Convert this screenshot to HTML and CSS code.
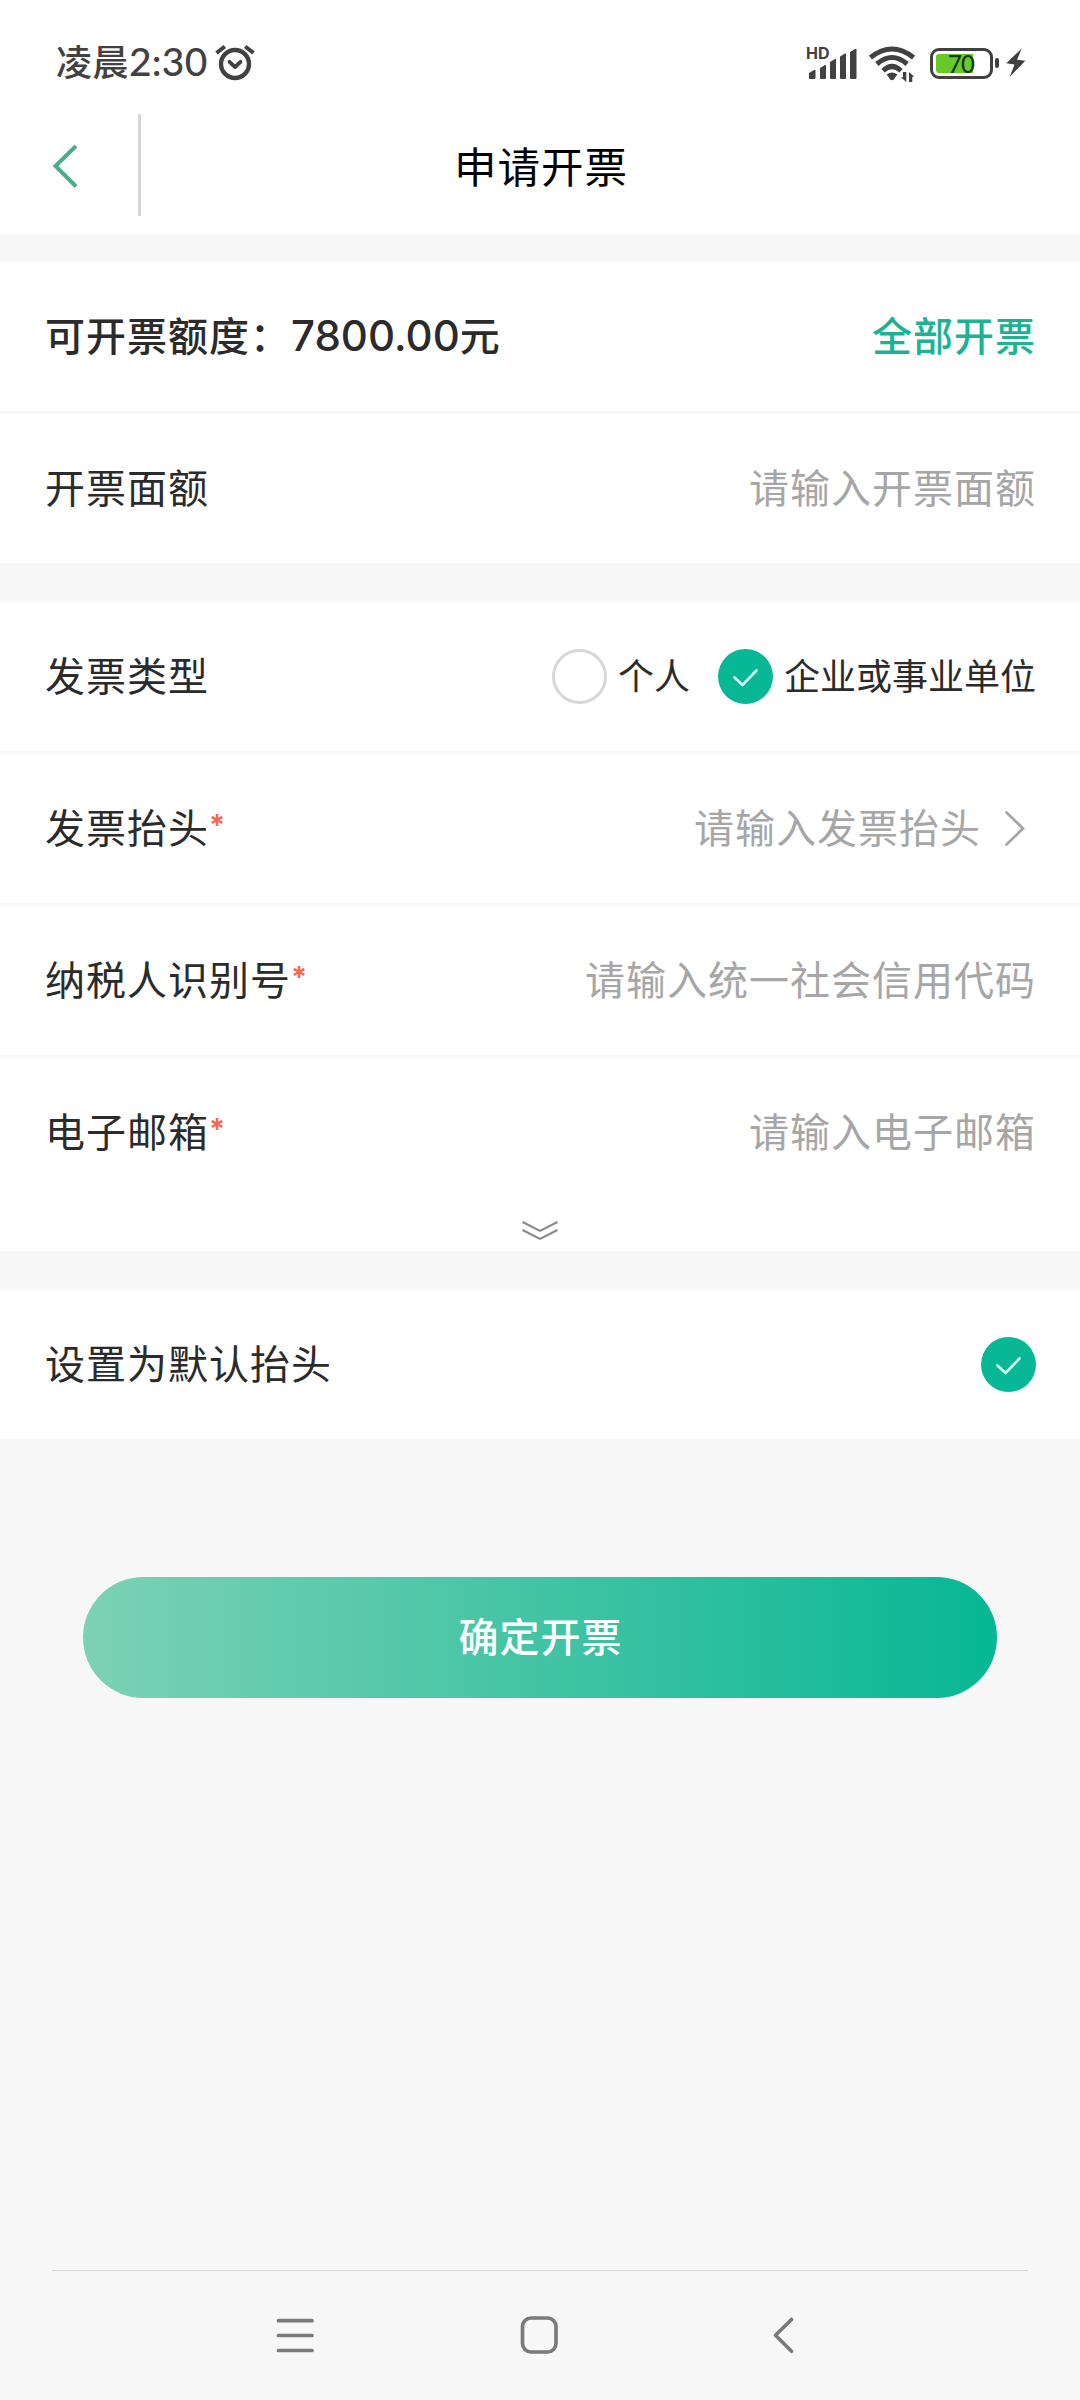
FILE: index.html
```html
<!DOCTYPE html>
<html lang="zh-CN">
<head>
<meta charset="utf-8">
<title>申请开票</title>
<link rel="stylesheet" href="styles.css">
</head>
<body>
<div class="status">
  <div class="status-left">
    <span class="time">凌晨<span class="time-num">2:30</span></span>
    <svg class="alarm" width="40" height="40" viewBox="0 0 40 40" fill="none" stroke="#414141" stroke-linecap="round" stroke-linejoin="round">
      <circle cx="20" cy="21" r="14" stroke-width="4.400"/>
      <path d="M14.500 18.800L20 24l5.500-5.200" stroke-width="3.800"/>
      <path d="M1.500 10L9.800 3.500M30.200 3.500l8.300 6.500" stroke-width="4" stroke-linecap="butt"/>
    </svg>
  </div>
  <div class="status-right">
    <div class="signal">
      <span class="hd">HD</span>
      <svg width="52" height="36" viewBox="0 0 52 36" fill="#414141">
        <path d="M3 29l5-3h1.500v8q0 1-1 1H4q-1 0-1-1zM14 24l5-3h1v13q0 1-1 1h-4q-1 0-1-1zM24 18l5-3h1v19q0 1-1 1h-4q-1 0-1-1zM34 12.500l5-3h1V34q0 1-1 1h-4q-1 0-1-1zM44 8l5-3h1.500v29q0 1-1 1H45q-1 0-1-1z"/>
      </svg>
    </div>
    <svg class="wifi" width="48" height="38" viewBox="0 0 48 38" fill="none" stroke="#414141" stroke-width="5">
      <path d="M2.500 13.500Q24-3.500 45.500 13.500M8.800 20Q24 7 39.200 20M15 26.800Q24 18.200 33 26.800"/>
      <path d="M18.700 30.500Q24 26.500 29.300 30.500L26 35.300Q24 37 22 35.300z" fill="#414141" stroke="none"/>
      <path d="M38.300 28v10l-5.500-4.800h2.200V28zM41 38V28l5.300 4.800h-2V38z" fill="#414141" stroke="none"/>
    </svg>
    <div class="battery"><div class="battery-fill"></div><span class="battery-num">70</span></div>
    <div class="knob"></div>
    <svg class="bolt" width="20" height="30" viewBox="0 0 20 30" fill="#414141"><path d="M15.700.500L.300 15.200l8.200 1.300L3.700 29 19.300 12.700l-8.200-1z"/></svg>
  </div>
</div>
<header class="header">
  <div class="back">
    <svg width="30" height="46" viewBox="0 0 30 46" fill="none" stroke="#4bae89" stroke-width="4"><path d="M26 3L5.500 23 26 43.500"/></svg>
  </div>
  <h1 class="title">申请开票</h1>
  <div class="header-end"></div>
</header>
<main>
  <section class="card">
    <div class="row strong"><span>可开票额度：<span class="amount">7800.00</span>元</span><span class="link">全部开票</span></div>
    <div class="row"><span>开票面额</span><span class="hint">请输入开票面额</span></div>
  </section>
  <section class="card">
    <div class="row">
      <span>发票类型</span>
      <div class="options">
        <span class="radio"></span><span class="option">个人</span>
        <svg class="check second" viewBox="0 0 55 55"><circle cx="27.500" cy="27.500" r="27.500" fill="#07b795"/><path d="M16.500 28.500l8 7.500 14-14.500" fill="none" stroke="#d5fff3" stroke-width="2.600" stroke-linecap="round" stroke-linejoin="round"/></svg>
        <span class="option">企业或事业单位</span>
      </div>
    </div>
    <div class="row">
      <span>发票抬头<span class="req">*</span></span>
      <div class="picker"><span class="hint">请输入发票抬头</span>
        <svg width="24" height="40" viewBox="0 0 24 40" fill="none" stroke="#a6a6a6" stroke-width="2.800" stroke-linecap="round"><path d="M3.500 3.500l16.500 16L3.500 35.500"/></svg>
      </div>
    </div>
    <div class="row"><span>纳税人识别号<span class="req">*</span></span><span class="hint">请输入统一社会信用代码</span></div>
    <div class="row"><span>电子邮箱<span class="req">*</span></span><span class="hint">请输入电子邮箱</span></div>
    <div class="more">
      <svg width="40" height="22" viewBox="0 0 40 22" fill="none" stroke="#888" stroke-width="2"><path d="M2.500 2L20 11 37.500 2M2.500 10L20 19l17.500-9"/></svg>
    </div>
  </section>
  <section class="card">
    <div class="row"><span>设置为默认抬头</span>
      <svg class="check last" viewBox="0 0 55 55"><circle cx="27.500" cy="27.500" r="27.500" fill="#07b795"/><path d="M16.500 28.500l8 7.500 14-14.500" fill="none" stroke="#d5fff3" stroke-width="2.600" stroke-linecap="round" stroke-linejoin="round"/></svg>
    </div>
  </section>
  <button class="submit"><span>确定开票</span></button>
</main>
<nav class="nav">
  <svg width="44" height="44" viewBox="0 0 44 44"><path d="M5.500 7.700h33.500M5.500 22.500h33.500M5.500 37.500h33.500"/></svg>
  <svg width="44" height="44" viewBox="0 0 44 44"><rect x="5.500" y="5" width="33.500" height="34" rx="8.500"/></svg>
  <svg width="44" height="44" viewBox="0 0 44 44"><path d="M30.500 6.500L14.500 22.300 30.500 38.200"/></svg>
</nav>
</body>
</html>
```
FILE: styles.css
```css
* { box-sizing: border-box; }

body {
  margin: 0;
  height: 2400px;
  display: flex;
  flex-direction: column;
  background: #f7f7f7;
  color: #2b2b2b;
  font-family: "Noto Sans CJK SC", sans-serif;
  font-size: 40px;
  letter-spacing: 1px;
}

svg { display: block; flex: none; }

.status {
  height: 108px;
  padding: 0 54px 0 56px;
  display: flex;
  justify-content: space-between;
  background: #fff;
  color: #414141;
}

.status-left { display: flex; }

.time {
  height: 120px;
  line-height: 121px;
  font-size: 36px;
  font-weight: 500;
  letter-spacing: 0.5px;
  white-space: nowrap;
}

.time-num {
  font-family: Lato, sans-serif;
  font-size: 39px;
  font-weight: 500;
  letter-spacing: 0.2px;
}

.alarm { margin: 43px 0 0 7px; }

.status-right { display: flex; padding-top: 44px; }

.signal { position: relative; width: 52px; margin-right: 10px; }

.hd {
  position: absolute;
  left: 0;
  top: 0;
  font: 700 16px/18px Inter, sans-serif;
  letter-spacing: 0;
}

.battery {
  position: relative;
  width: 63px;
  height: 31px;
  margin: 4px 2px 0 14px;
  padding: 3px;
  border: 3px solid #414141;
  border-radius: 9px;
}

.battery-fill { width: 37px; height: 19px; background: #67c92a; border-radius: 3px 0 0 3px; }

.battery-num {
  position: absolute;
  left: 15px;
  top: 0;
  font: 500 24px/25px Lato, sans-serif;
  letter-spacing: -1px;
  color: #17380a;
}

.knob { width: 4px; height: 10px; margin: 14px 7px 0 0; border-radius: 2px; background: #414141; }

.bolt { margin-top: 4px; }

.header {
  height: 126px;
  padding: 6px 0 18px;
  display: flex;
  background: #fff;
}

.back {
  width: 141px;
  padding: 29px 0 0 50px;
  border-right: 3px solid #d6d6d6;
}

.title {
  flex: 1;
  margin: 0;
  padding-left: 2px;
  line-height: 101px;
  text-align: center;
  font-size: 42.5px;
  font-weight: 400;
  color: #000;
}

.header-end { width: 141px; }

.card { margin-top: 39px; background: #fff; }
.card:first-child { margin-top: 28px; }

.row {
  height: 149px;
  padding: 0 44px 0 45px;
  display: flex;
  align-items: center;
  justify-content: space-between;
  line-height: 60px;
  white-space: nowrap;
}

.row + .row { height: 152px; border-top: 3px solid #f7f7f7; }

.row > span, .hint, .submit span { padding-bottom: 6px; }

.strong { font-weight: 500; }
.link { color: #1cb394; }
.hint { color: #a6a6a6; }

.amount {
  font-family: Inter, sans-serif;
  font-size: 42px;
  line-height: 1;
  letter-spacing: 0;
}

.req {
  font-family: Inter, sans-serif;
  font-size: 29px;
  line-height: 1;
  font-weight: 700;
  vertical-align: 8px;
  color: #f4694f;
}

.options { display: flex; align-items: center; }
.option { margin-left: 11px; padding-bottom: 5px; font-size: 36px; letter-spacing: 0; }
.radio { width: 55px; height: 55px; border: 3px solid #d8d8d8; border-radius: 50%; }
.check { width: 55px; height: 55px; }
.second { margin-left: 28px; }

.picker { display: flex; align-items: center; gap: 22px; margin-right: 9px; }

.more { height: 44px; padding-top: 13px; display: flex; justify-content: center; }

.submit {
  width: 914px;
  height: 121px;
  margin: 138px auto 0;
  padding: 0 0 0 1px;
  display: flex;
  align-items: center;
  justify-content: center;
  border: 0;
  border-radius: 61px;
  background: linear-gradient(90deg, #7dd1b4, #07b795);
  color: #fff;
  font: inherit;
  font-weight: 500;
  letter-spacing: 1px;
}

.nav {
  height: 130px;
  margin: auto 52px 0;
  padding: 42px 223px 0 221px;
  display: flex;
  justify-content: space-between;
  border-top: 1px solid #d8d8d8;
  fill: none;
  stroke: #7a7a7a;
  stroke-width: 3.7;
  stroke-linecap: round;
  stroke-linejoin: round;
}
```
